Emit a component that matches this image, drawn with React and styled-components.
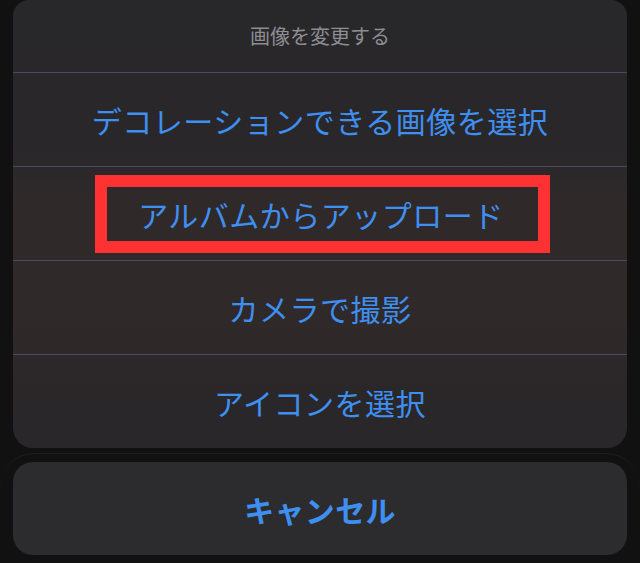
import React from "react"
import styled, { createGlobalStyle } from 'styled-components';

const GlobalStyle = createGlobalStyle`
  html, body {
    margin: 0;
    padding: 0;
    background: #111111;
  }
  body {
    font-family: "Noto Sans CJK JP", "Noto Sans", sans-serif;
  }
`

const actions = [
  { label: "デコレーションできる画像を選択" },
  { label: "アルバムからアップロード", highlight: true },
  { label: "カメラで撮影" },
  { label: "アイコンを選択" },
]

function App(){
  return (
    <Page>
      <GlobalStyle />
      <Sheet>
        <Title>画像を変更する</Title>
        {actions.map(a => (
          <Action key={a.label}>
            <Label $highlight={a.highlight}>{a.label}</Label>
          </Action>
        ))}
      </Sheet>
      <CancelWrap>
        <Cancel>キャンセル</Cancel>
      </CancelWrap>
    </Page>
  )
};

const Page = styled.div`
  width: 640px;
  height: 563px;
  overflow: hidden;
  display: flex;
  flex-direction: column;
  background: #111111;
`

const Sheet = styled.div`
  margin: 0 13px;
  height: 448px;
  display: flex;
  flex-direction: column;
  border-radius: 16px 16px 20px 20px;
  overflow: hidden;
  background: linear-gradient(180deg,
    #28272a 0px,
    #29272a 150px,
    #2f292a 200px,
    #30292a 320px,
    #2a2729 390px,
    #28272a 100%);
`

const Title = styled.div`
  height: 72px;
  display: flex;
  align-items: center;
  justify-content: center;
  font-size: 20px;
  color: #8d8d92;
  padding-bottom: 2px;
  box-sizing: border-box;
`

const Action = styled.div`
  height: 94px;
  border-top: 1px solid #4a4d5f;
  box-sizing: border-box;
  display: flex;
  align-items: center;
  justify-content: center;
`

const Label = styled.span`
  font-size: 30px;
  line-height: 30px;
  color: #3f8ff0;
  letter-spacing: 0.5px;
  ${p => p.$highlight && `
    border: 12px solid #fe3233;
    padding: 12px 34px 12px 31px;
    margin-left: 5px;
  `}
`

const CancelWrap = styled.div`
  margin-top: 5px;
  padding: 8px 13px 8px;
  border-top: 1px solid #1e1e1e;
  border-radius: 34px 34px 0 0;
`

const Cancel = styled.div`
  height: 93px;
  border-radius: 20px;
  background: #2c2c2e;
  display: flex;
  align-items: center;
  justify-content: center;
  font-size: 30px;
  font-weight: 700;
  color: #3f8ff0;
  letter-spacing: 0.3px;
`

export default App;
